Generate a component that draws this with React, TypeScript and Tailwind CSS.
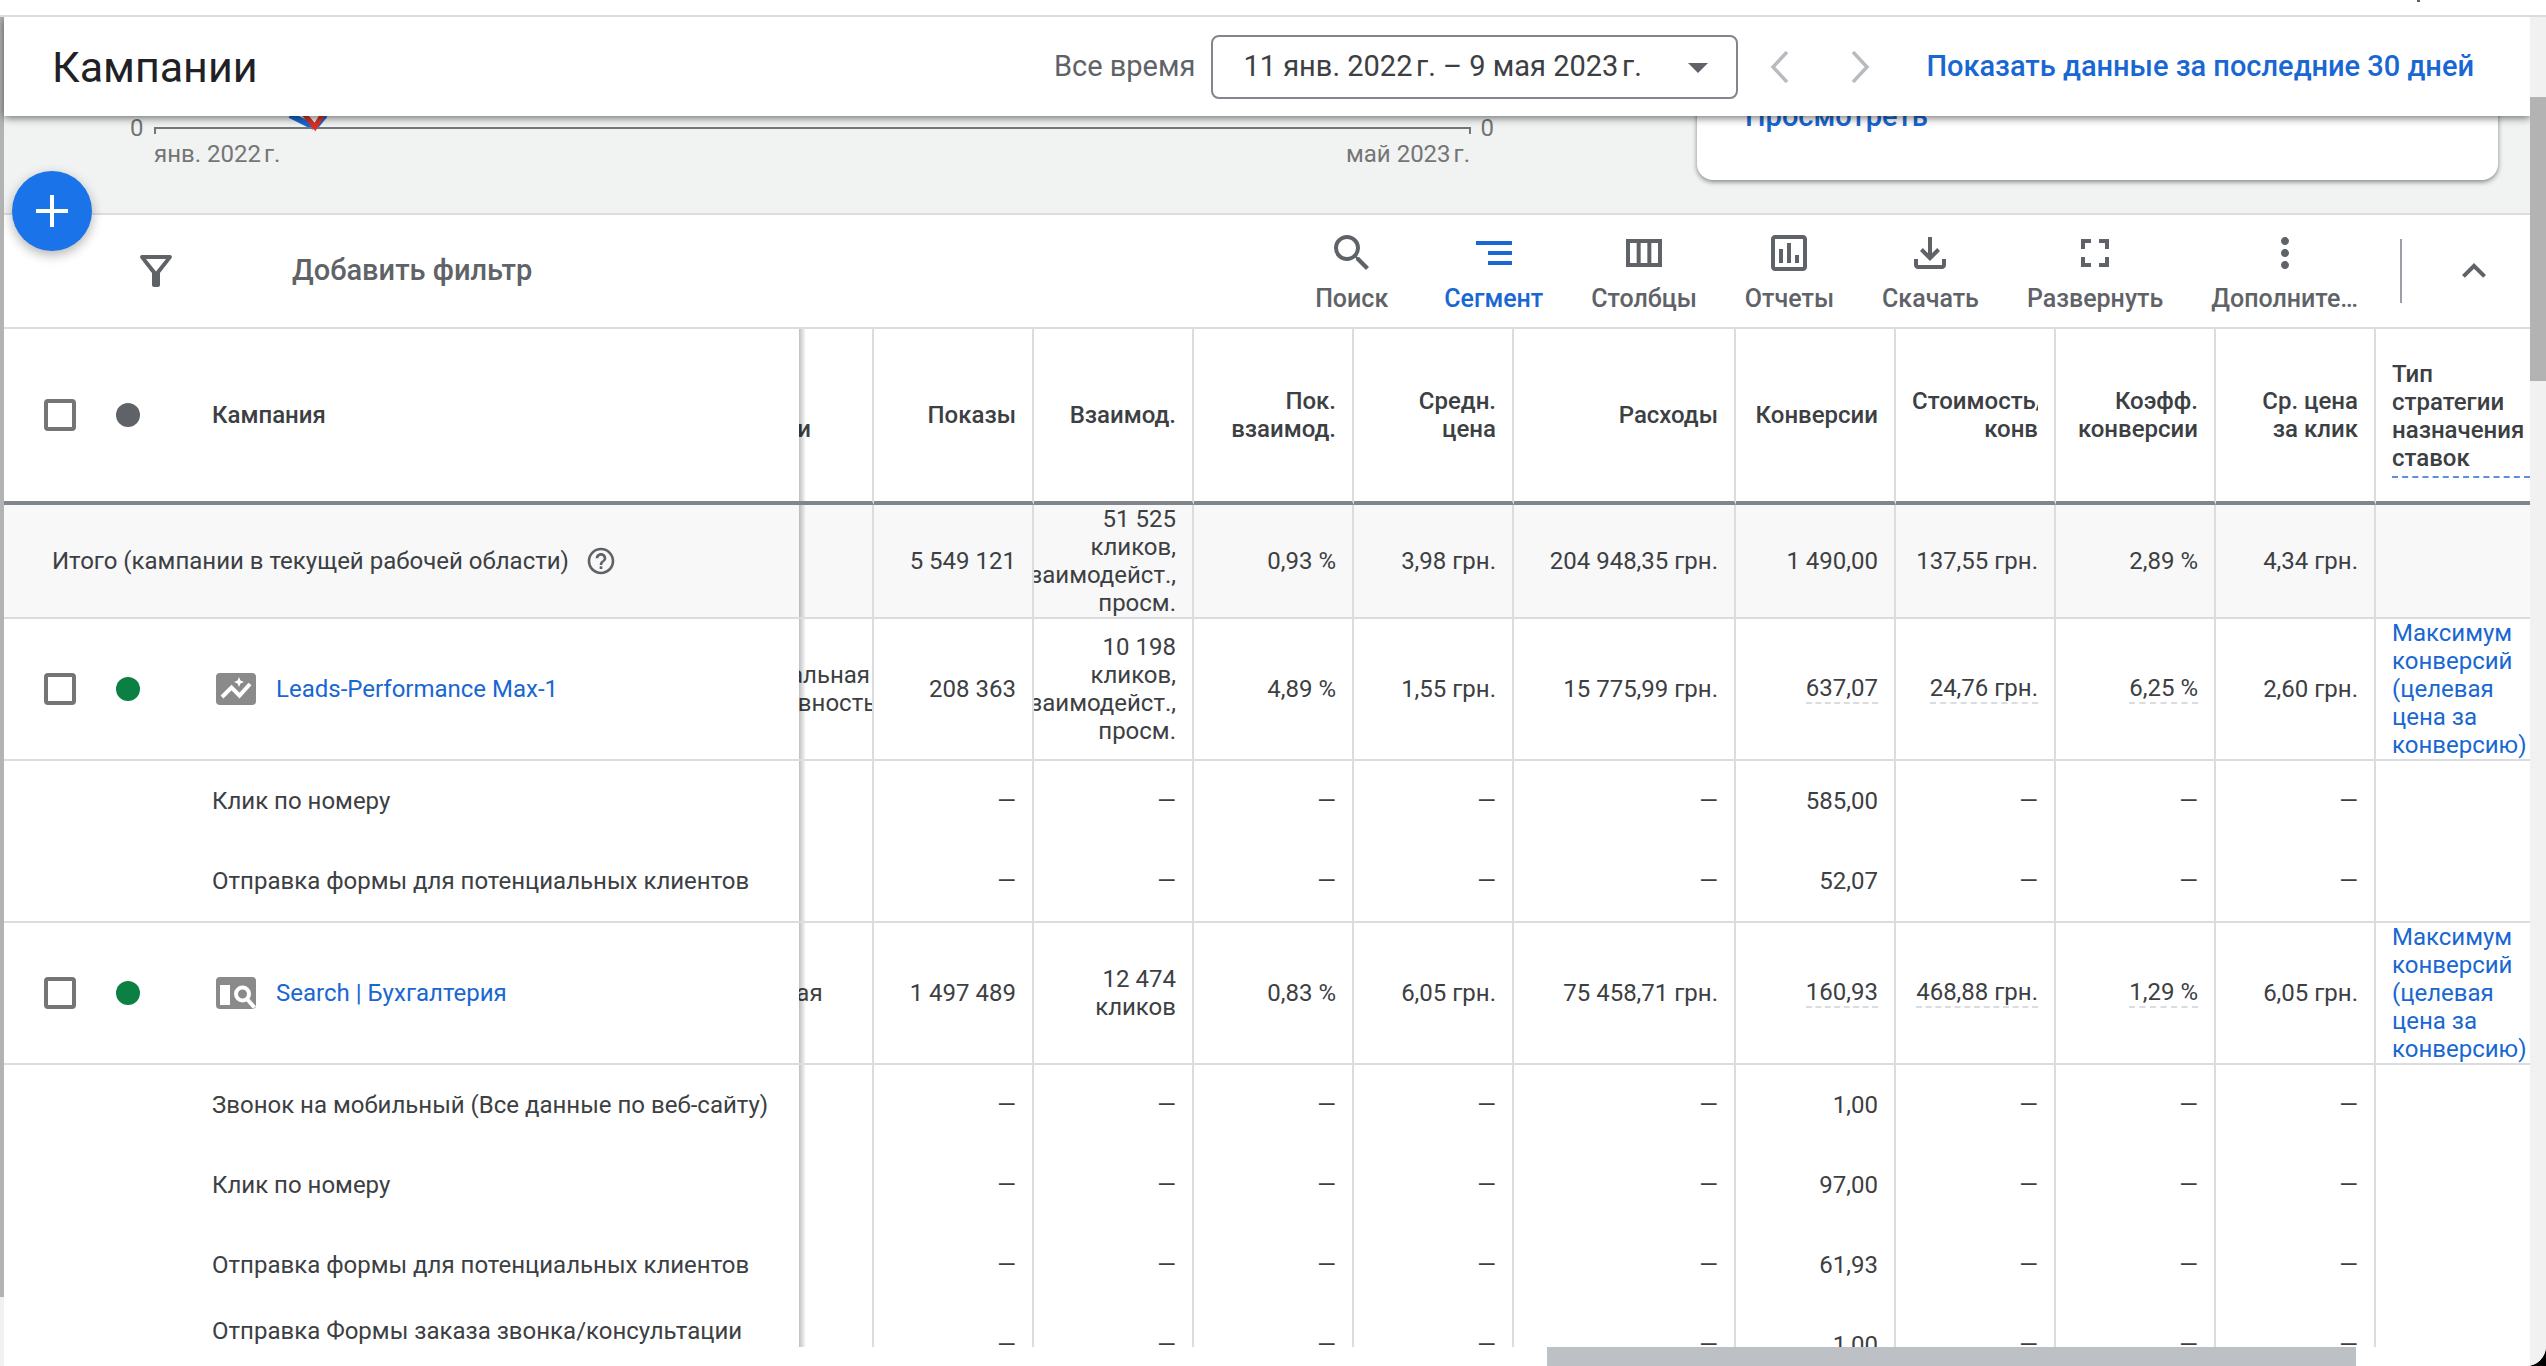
import { Fragment, type ReactNode } from 'react';
import { clsx } from 'clsx';
import {
  MdArrowDropDown,
  MdExpandLess,
  MdFullscreen,
  MdHelpOutline,
  MdMoreVert,
  MdOutlineAssessment,
  MdOutlineFilterAlt,
  MdSearch,
} from 'react-icons/md';

interface SubRow {
  name: string;
  conversions: string;
  tall?: boolean;
}

interface Campaign {
  id: string;
  name: string;
  icon: ReactNode;
  type: string;
  impressions: string;
  interactions: string[];
  rate: string;
  avgCost: string;
  cost: string;
  conversions: string;
  costPerConv: string;
  convRate: string;
  cpc: string;
  strategy: string;
  segments: SubRow[];
}

function SegmentIcon() {
  return (
    <svg viewBox="0 0 24 24" fill="currentColor" className="size-12">
      <path d="M9 18h12v-2H9v2zM3 6v2h18V6H3zm6 7h12v-2H9v2z" />
    </svg>
  );
}

function ColumnsIcon() {
  return (
    <svg viewBox="0 0 24 24" fill="currentColor" className="size-12">
      <path d="M3 5v14h18V5H3zm5.33 12H5V7h3.33v10zm5.34 0h-3.33V7h3.33v10zM19 17h-3.33V7H19v10z" />
    </svg>
  );
}

function DownloadIcon() {
  return (
    <svg viewBox="0 0 24 24" fill="currentColor" className="size-12">
      <path d="m12 16-5-5 1.4-1.45 2.6 2.6V4h2v8.15l2.6-2.6L17 11l-5 5zm-6 4q-.825 0-1.413-.588T4 18v-3h2v3h12v-3h2v3q0 .825-.588 1.413T18 20H6z" />
    </svg>
  );
}

function PerformanceMaxIcon() {
  return (
    <svg viewBox="0 0 40 32" className="h-8 w-10">
      <rect width="40" height="32" rx="4" fill="#8a8a8a" />
      <path d="M6 24 15.5 14.5l8 8L34 11" fill="none" stroke="#fff" strokeWidth="4" />
      <path d="m23 4 1.5 3.5L28 9l-3.500 1.500L23 14l-1.500-3.500L18 9l3.500-1.500z" fill="#fff" />
    </svg>
  );
}

function SearchCampaignIcon() {
  return (
    <svg viewBox="0 0 40 32" className="h-8 w-10">
      <rect width="40" height="32" rx="4" fill="#8a8a8a" />
      <rect x="4" y="8" width="10" height="20" fill="#fff" />
      <circle cx="26.500" cy="17" r="6.500" fill="none" stroke="#fff" strokeWidth="4" />
      <path d="m31 22 7.500 8.500" stroke="#fff" strokeWidth="4" />
    </svg>
  );
}

const campaigns: Campaign[] = [
  {
    id: 'leads',
    name: 'Leads-Performance Max-1',
    icon: <PerformanceMaxIcon />,
    type: 'Максимальная эффективность',
    impressions: '208 363',
    interactions: ['10 198', 'кликов,', 'взаимодейст.,', 'просм.'],
    rate: '4,89 %',
    avgCost: '1,55 грн.',
    cost: '15 775,99 грн.',
    conversions: '637,07',
    costPerConv: '24,76 грн.',
    convRate: '6,25 %',
    cpc: '2,60 грн.',
    strategy: 'Максимум конверсий (целевая цена за конверсию)',
    segments: [
      { name: 'Клик по номеру', conversions: '585,00' },
      { name: 'Отправка формы для потенциальных клиентов', conversions: '52,07' },
    ],
  },
  {
    id: 'search',
    name: 'Search | Бухгалтерия',
    icon: <SearchCampaignIcon />,
    type: 'Поисковая',
    impressions: '1 497 489',
    interactions: ['12 474', 'кликов'],
    rate: '0,83 %',
    avgCost: '6,05 грн.',
    cost: '75 458,71 грн.',
    conversions: '160,93',
    costPerConv: '468,88 грн.',
    convRate: '1,29 %',
    cpc: '6,05 грн.',
    strategy: 'Максимум конверсий (целевая цена за конверсию)',
    segments: [
      { name: 'Звонок на мобильный (Все данные по веб-сайту)', conversions: '1,00' },
      { name: 'Клик по номеру', conversions: '97,00' },
      { name: 'Отправка формы для потенциальных клиентов', conversions: '61,93' },
      { name: 'Отправка Формы заказа звонка/консультации', conversions: '1,00', tall: true },
    ],
  },
];

const headings = [
  ['Показы'],
  ['Взаимод.'],
  ['Пок.', 'взаимод.'],
  ['Средн.', 'цена'],
  ['Расходы'],
  ['Конверсии'],
  ['Стоимость/', 'конв'],
  ['Коэфф.', 'конверсии'],
  ['Ср. цена', 'за клик'],
];

const tools = [
  { label: 'Поиск', icon: <MdSearch className="size-12" />, className: 'mr-2' },
  { label: 'Сегмент', icon: <SegmentIcon />, className: 'text-[#1967d2]' },
  { label: 'Столбцы', icon: <ColumnsIcon /> },
  { label: 'Отчеты', icon: <MdOutlineAssessment className="size-12" /> },
  { label: 'Скачать', icon: <DownloadIcon /> },
  { label: 'Развернуть', icon: <MdFullscreen className="size-12" /> },
  { label: 'Дополните…', icon: <MdMoreVert className="size-12" /> },
];

// the side shadow is a gradient strip, so it runs on from row to row
const stickyCell =
  'sticky left-0 z-10 border-[#dadce0] p-0 after:absolute after:inset-y-0 after:left-full after:w-[7px] after:bg-linear-to-r after:from-black/25 after:to-transparent';
const cell = 'border-r-2 border-[#dadce0] p-0';

function Checkbox({ label }: { label: string }) {
  return (
    <input
      type="checkbox"
      aria-label={label}
      className="size-8 shrink-0 appearance-none rounded border-4 border-[#757575] bg-white checked:bg-[#757575]"
    />
  );
}

function NumberCell({ children, line, dashed }: { children: ReactNode; line?: boolean; dashed?: boolean }) {
  return (
    <td className={clsx(cell, line && 'border-b-2')}>
      <div className="flex flex-col items-end overflow-hidden pr-4 whitespace-nowrap">
        {dashed ? <span className="border-b-2 border-dashed border-[#dadce0]">{children}</span> : children}
      </div>
    </td>
  );
}

// scrolled partly under the sticky name column
function TypeCell({ text, line }: { text: string; line?: boolean }) {
  return (
    <td className={clsx(cell, 'overflow-hidden', line && 'border-b-2')}>
      <div className="-ml-[100px] w-[173px]">{text}</div>
    </td>
  );
}

function Lines({ items }: { items: string[] }) {
  return (
    <>
      {items.map((item) => (
        <span key={item}>{item}</span>
      ))}
    </>
  );
}

function Header() {
  return (
    <header className="relative z-30 flex h-[99px] shrink-0 items-center bg-white pr-14 pl-12 shadow-[0_2px_8px_rgba(0,0,0,0.55)]">
      <h1 className="flex-1 text-[43px] leading-[56px] text-[#202124]">Кампании</h1>
      <label htmlFor="period" className="mr-4 text-[29px] text-[#5f6368]">
        Все время
      </label>
      <div className="relative">
        <select
          id="period"
          className="block h-16 w-[527px] appearance-none rounded-lg border-2 border-[#80868b] bg-white pl-[30px] text-[29px] text-[#3c4043]"
        >
          <option>11 янв. 2022{'\u202f'}г. – 9 мая 2023{'\u202f'}г.</option>
        </select>
        <MdArrowDropDown className="pointer-events-none absolute top-2 right-4 size-12 text-[#5f6368]" />
      </div>
      <button aria-label="Предыдущий период" className="ml-6 flex size-9 items-center justify-center">
        <svg viewBox="0 0 20 32" className="h-8 w-5" fill="none" stroke="#b8bbbf" strokeWidth="3.500">
          <path d="M17 1 3 16l14 15" />
        </svg>
      </button>
      <button aria-label="Следующий период" className="ml-11 flex size-9 items-center justify-center">
        <svg viewBox="0 0 20 32" className="h-8 w-5" fill="none" stroke="#b8bbbf" strokeWidth="3.500">
          <path d="m3 1 14 15L3 31" />
        </svg>
      </button>
      <a href="#last30" className="ml-12 text-[29px] font-medium text-[#1967d2]">
        Показать данные за последние 30 дней
      </a>
    </header>
  );
}

function ChartBand() {
  return (
    <section className="relative flex h-[99px] shrink-0 items-start border-b-2 border-[#dadce0] bg-[#f1f3f3] text-2xl text-[#757575]">
      <div className="flex-1 pr-[203px] pl-[126px]">
        <div className="flex h-6 items-center gap-[10px]">
          <span>0</span>
          <svg className="h-6 min-w-0 flex-1" fill="none">
            <path d="M136 -1 160 11M161 11 171 -1" stroke="#1967d2" strokeWidth="6" />
            <line x1="0" x2="100%" y1="12" y2="12" stroke="#757575" strokeWidth="2" />
            <path d="M1 12v6" stroke="#757575" strokeWidth="2" />
            <line x1="100%" x2="100%" y1="12" y2="18" stroke="#757575" strokeWidth="4" />
            <path d="M150 -2 161 11 169 -2" stroke="#d93025" strokeWidth="5" />
          </svg>
          <span>0</span>
        </div>
        <div className="flex justify-between px-6 leading-7">
          <span>янв. 2022{'\u202f'}г.</span>
          <span>май 2023{'\u202f'}г.</span>
        </div>
      </div>
      <div className="-mt-6 mr-8 w-[801px] rounded-2xl bg-white px-12 pt-2 pb-12 shadow-[0_2px_5px_rgba(0,0,0,0.45)]">
        <a href="#view" className="block text-[29px] leading-8 font-medium text-[#1967d2]">
          Просмотреть
        </a>
      </div>
      <button
        aria-label="Создать"
        className="absolute top-[55px] left-2 z-20 flex size-20 items-center justify-center rounded-full bg-[#1a73e8] shadow-[0_4px_12px_rgba(0,0,0,0.3)]"
      >
        <svg viewBox="0 0 32 32" className="size-8" stroke="#fff" strokeWidth="4">
          <path d="M16 0v32M0 16h32" />
        </svg>
      </button>
    </section>
  );
}

function Toolbar() {
  return (
    <div className="flex h-[114px] shrink-0 items-center border-b-2 border-[#dadce0] pr-8 pl-32 text-[#5f6368]">
      <MdOutlineFilterAlt className="size-12" />
      <button className="ml-28 text-[29px] font-medium">Добавить фильтр</button>
      <div className="ml-auto flex gap-12">
        {tools.map((tool) => (
          <button key={tool.label} className={clsx('flex flex-col items-center gap-2 text-[25px] leading-7 font-medium', tool.className)}>
            {tool.icon}
            {tool.label}
          </button>
        ))}
      </div>
      <div className="ml-[42px] h-16 w-[2px] bg-[#9aa0a6]" />
      <button aria-label="Свернуть" className="ml-12">
        <MdExpandLess className="size-12" />
      </button>
    </div>
  );
}

function CampaignTable() {
  return (
    <table className="w-full table-fixed border-separate border-spacing-0 text-2xl leading-7 text-[#3c4043]">
      <colgroup>
        <col />
        <col className="w-[75px]" />
        <col className="w-40" />
        <col className="w-40" />
        <col className="w-40" />
        <col className="w-40" />
        <col className="w-[222px]" />
        <col className="w-40" />
        <col className="w-40" />
        <col className="w-40" />
        <col className="w-40" />
        <col className="w-[154px]" />
      </colgroup>
      <thead>
        <tr className="h-44 text-right [&>th]:border-b-4 [&>th]:border-b-[#80868b] [&>th]:font-medium">
          <th className={clsx(stickyCell, 'bg-white')}>
            <div className="flex items-center pl-10">
              <Checkbox label="Выбрать все" />
              <span className="ml-10 size-6 rounded-full bg-[#5f6368]" />
              <span className="ml-18">Кампания</span>
            </div>
          </th>
          <th className={clsx(cell, 'overflow-hidden text-left')}>
            <div className="-ml-[100px]">
              Тип
              <br />
              кампании
            </div>
          </th>
          {headings.map((lines) => (
            <th key={lines[0]} className={cell}>
              <div className="mr-4 ml-4 overflow-hidden">
                {lines.map((line) => (
                  <div key={line}>{line}</div>
                ))}
              </div>
            </th>
          ))}
          <th className="overflow-hidden p-0 pl-4 text-left">
            <div className="border-b-2 border-dashed border-[#5f8fd8] pt-2 pb-1">Тип стратегии назначения ставок</div>
          </th>
        </tr>
      </thead>
      <tbody>
        <tr className="h-[114px] bg-[#f8f8f8]">
          <td className={clsx(stickyCell, 'border-b-2 bg-[#f8f8f8]')}>
            <div className="flex items-center pl-12">
              Итого (кампании в текущей рабочей области)
              <MdHelpOutline className="ml-4 size-8 text-[#5f6368]" />
            </div>
          </td>
          <TypeCell line text="" />
          <NumberCell line>5 549 121</NumberCell>
          <NumberCell line>
            <Lines items={['51 525', 'кликов,', 'взаимодейст.,', 'просм.']} />
          </NumberCell>
          <NumberCell line>0,93 %</NumberCell>
          <NumberCell line>3,98 грн.</NumberCell>
          <NumberCell line>204 948,35 грн.</NumberCell>
          <NumberCell line>1 490,00</NumberCell>
          <NumberCell line>137,55 грн.</NumberCell>
          <NumberCell line>2,89 %</NumberCell>
          <NumberCell line>4,34 грн.</NumberCell>
          <td className="border-b-2 border-[#dadce0]" />
        </tr>
        {campaigns.map((c) => (
          <Fragment key={c.id}>
            <tr className="h-[142px]">
              <td className={clsx(stickyCell, 'border-b-2 bg-white')}>
                <div className="flex items-center pl-10">
                  <Checkbox label={c.name} />
                  <span className="mr-19 ml-10 size-6 rounded-full bg-[#0b8043]" />
                  {c.icon}
                  <a href={'#' + c.id} className="ml-5 text-[#1967d2]">
                    {c.name}
                  </a>
                </div>
              </td>
              <TypeCell line text={c.type} />
              <NumberCell line>{c.impressions}</NumberCell>
              <NumberCell line>
                <Lines items={c.interactions} />
              </NumberCell>
              <NumberCell line>{c.rate}</NumberCell>
              <NumberCell line>{c.avgCost}</NumberCell>
              <NumberCell line>{c.cost}</NumberCell>
              <NumberCell line dashed>{c.conversions}</NumberCell>
              <NumberCell line dashed>{c.costPerConv}</NumberCell>
              <NumberCell line dashed>{c.convRate}</NumberCell>
              <NumberCell line>{c.cpc}</NumberCell>
              <td className="border-b-2 border-[#dadce0] p-0 pl-4">
                <a href="#strategy" className="block text-[#1967d2]">
                  {c.strategy}
                </a>
              </td>
            </tr>
            {c.segments.map((s, i) => {
              const last = i === c.segments.length - 1;
              return (
                <tr key={s.name} className={last ? 'h-[82px]' : 'h-20'}>
                  <td className={clsx(stickyCell, 'bg-white', last && 'border-b-2')}>
                    <div className={clsx('pl-52', s.tall && 'pb-7')}>{s.name}</div>
                  </td>
                  <TypeCell line={last} text="" />
                  {[0, 1, 2, 3, 4].map((n) => (
                    <NumberCell key={n} line={last}>—</NumberCell>
                  ))}
                  <NumberCell line={last}>{s.conversions}</NumberCell>
                  {[5, 6, 7].map((n) => (
                    <NumberCell key={n} line={last}>—</NumberCell>
                  ))}
                  <td className={clsx('border-[#dadce0]', last && 'border-b-2')} />
                </tr>
              );
            })}
          </Fragment>
        ))}
      </tbody>
    </table>
  );
}

export default function App() {
  return (
    <div className="h-screen bg-black font-[Roboto,sans-serif]">
      <div className="flex h-full flex-col overflow-hidden rounded-br-[20px] bg-white">
        <div className="relative z-40 flex h-[17px] shrink-0 items-start justify-end border-b-2 border-[#dadce0] bg-white pr-[126px]">
          <span className="h-[2px] w-[3px] bg-[#5f6368]" />
        </div>
        <div className="flex min-h-0 flex-1">
          <div className="flex w-1 flex-col bg-[#f1f1f1]">
            <div className="mb-[69px] flex-1 bg-[#b3b3b3]" />
          </div>
          <main className="flex min-w-0 flex-1 flex-col">
            <Header />
            <ChartBand />
            <Toolbar />
            <div className="min-h-0 flex-1 overflow-hidden">
              <CampaignTable />
            </div>
            <div className="flex h-[19px] shrink-0 justify-end bg-white">
              <div className="mr-[174px] w-[809px] bg-[#bdc1c6]" />
            </div>
          </main>
          <div className="relative z-40 w-4 bg-[#f1f1f1] pt-20">
            <div className="h-[284px] bg-[#b3b3b3]" />
          </div>
        </div>
      </div>
    </div>
  );
}
